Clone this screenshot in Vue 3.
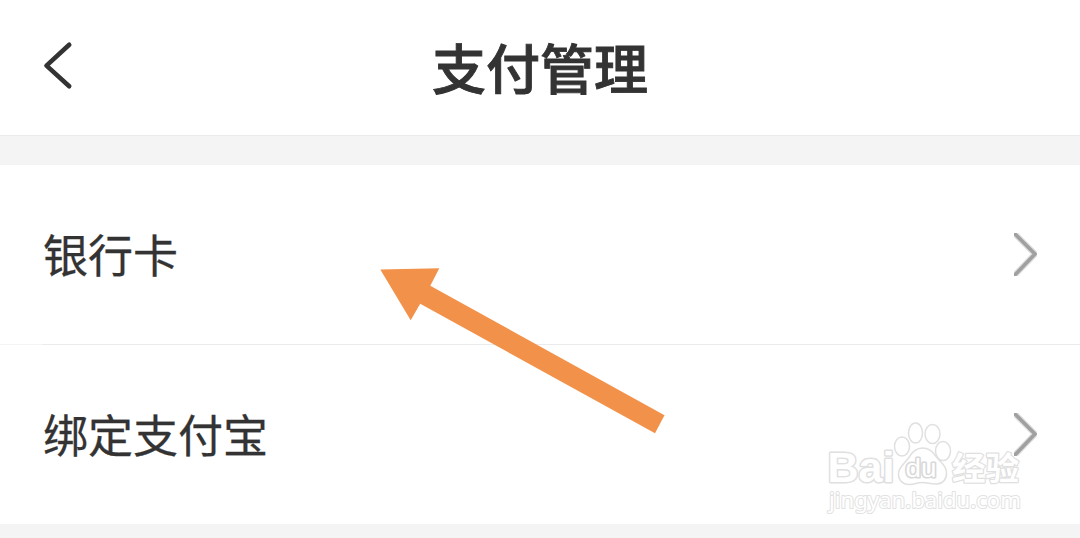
<template>
  <div class="page">
    <header class="nav-bar">
      <button class="nav-back" type="button" aria-label="返回">
        <svg width="32" height="52" viewBox="0 0 32 52">
          <path d="M28.2 4.8L5.5 25.6L28.2 46.2" />
        </svg>
      </button>
      <h1 class="nav-title">支付管理</h1>
    </header>

    <main class="list">
      <div v-for="item in items" :key="item" class="list-item">
        <span class="item-label">{{ item }}</span>
        <svg class="item-arrow" width="23" height="43" viewBox="0 0 23 43">
          <path class="arrow-edge" d="M-2 -2L21 21L-2 45" />
          <path d="M-2 -2L21 21L-2 45" />
        </svg>
      </div>
    </main>

    <svg class="pointer" width="286" height="168" viewBox="0 0 286 168">
      <path d="M0.3 1.5L59.3 0.2L50.3 17.7L284.5 147.3L275 165.3L40.2 35.7L30.7 52.2Z" />
    </svg>

    <svg class="watermark" width="220" height="110" viewBox="820 415 220 110">
      <g class="mark">
        <text class="brand" x="827.5" y="482" textLength="67" lengthAdjust="spacingAndGlyphs">Bai</text>
        <ellipse cx="902" cy="446.5" rx="7.5" ry="9.5" />
        <ellipse cx="915.5" cy="433" rx="7" ry="10" />
        <ellipse cx="932.5" cy="434" rx="7.5" ry="9.5" />
        <ellipse cx="943" cy="451" rx="7.5" ry="9.5" />
        <path d="M922.5 448C916 448 912 452 908.5 458C904 464 898.5 467 898.5 474C898.5 481 904 485 910 484.5C915 484 918 482.5 922.5 482.5C927 482.5 932 484.5 937 484C943 483.5 947 479 946.5 472C946 465 940 462 936 456.5C932.5 451 929 448 922.5 448Z" />
        <text class="du" x="905.5" y="477" textLength="31" lengthAdjust="spacingAndGlyphs">du</text>
        <text class="brand-cn" x="952" y="480" textLength="67" lengthAdjust="spacingAndGlyphs">经验</text>
        <text class="site" x="829" y="508" textLength="192" lengthAdjust="spacingAndGlyphs">jingyan.baidu.com</text>
      </g>
    </svg>
  </div>
</template>

<script setup>
const items = ["银行卡", "绑定支付宝"];
</script>

<style>
body {
  background: #f4f4f4;
}
</style>

<style scoped>
.page {
  position: relative;
  height: 538px;
  overflow: hidden;
  background: #f4f4f4;
  color: #333333;
  font-family: "Noto Sans CJK SC", sans-serif;
}

.nav-bar {
  display: grid;
  grid-template-columns: 120px 1fr 120px;
  align-items: center;
  height: 136px;
  box-sizing: border-box;
  border-bottom: 1px solid #ebebeb;
  background: #ffffff;
}

.nav-back {
  display: flex;
  margin: 0 0 4px;
  padding: 0 0 0 41px;
  border: none;
  background: transparent;
}

.nav-back path {
  fill: none;
  stroke: #333333;
  stroke-width: 4.6;
  stroke-linecap: round;
  stroke-linejoin: round;
}

.nav-title {
  margin: 0;
  padding-bottom: 1px;
  font-size: 54px;
  font-weight: 500;
  line-height: 80px;
  text-align: center;
  -webkit-text-stroke: 0.9px #333333;
}

.list {
  margin-top: 29px;
  background: #ffffff;
}

.list-item {
  display: flex;
  align-items: center;
  justify-content: space-between;
  height: 179px;
  padding: 0 43px;
}

.list-item + .list-item {
  border-top: 1px solid;
  border-image: linear-gradient(to right, #f5f5f5 43px, #ebebeb 43px) 1;
}

.item-label {
  padding-bottom: 2px;
  font-size: 45px;
  line-height: 66px;
  -webkit-text-stroke: 0.3px #333333;
}

.item-arrow path {
  fill: none;
  stroke: #a0a0a0;
  stroke-width: 3.6;
}

.item-arrow .arrow-edge {
  stroke: #dddddd;
  stroke-width: 6;
}

.pointer {
  position: absolute;
  top: 268px;
  left: 380px;
  fill: #f2924a;
}

.watermark {
  position: absolute;
  top: 415px;
  left: 820px;
}

.mark {
  fill: #ffffff;
  stroke: #e0e0e0;
  stroke-width: 1.5;
  stroke-linejoin: round;
}

.brand {
  font-family: "Liberation Sans", Arial, sans-serif;
  font-size: 43px;
  font-weight: 700;
  stroke-width: 3;
  paint-order: stroke;
}

.du {
  font-family: "Liberation Sans", Arial, sans-serif;
  font-size: 25px;
  font-weight: 400;
  stroke: #d8d8d8;
  stroke-width: 3;
  paint-order: stroke;
}

.brand-cn {
  font-size: 32px;
  font-weight: 700;
  stroke-width: 2.4;
  paint-order: stroke;
}

.site {
  font-family: "Noto Sans", sans-serif;
  font-size: 22px;
  font-weight: 400;
  stroke: #e2e2e2;
  stroke-width: 2;
  paint-order: stroke;
}
</style>
